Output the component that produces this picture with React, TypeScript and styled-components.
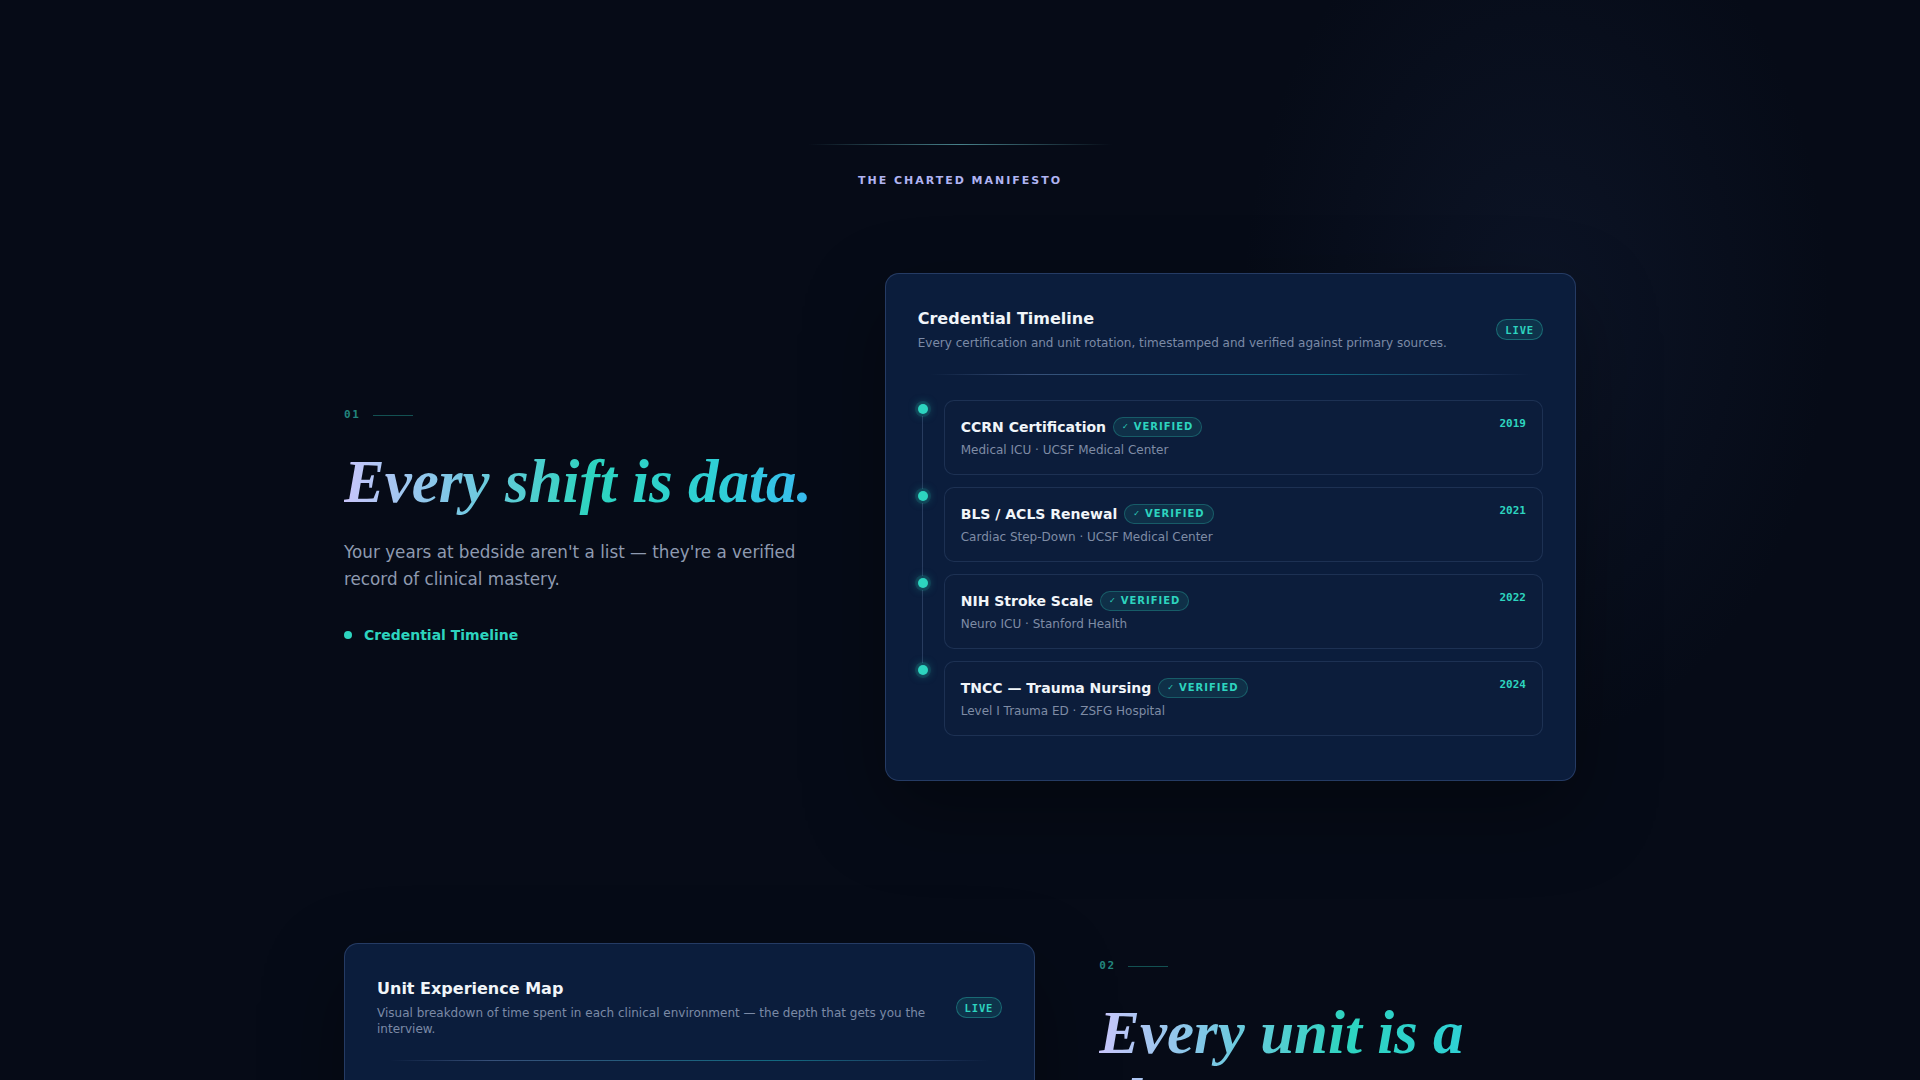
import React from 'react'
import styled, { createGlobalStyle } from 'styled-components'

const GlobalStyle = createGlobalStyle`
	html, body {
		margin: 0;
		padding: 0;
		background: #060b17;
	}
	body {
		font-family: 'DejaVu Sans', 'Noto Sans', sans-serif;
		color: #e2e8f0;
		-webkit-font-smoothing: antialiased;
	}
	* {
		box-sizing: border-box;
	}
`

const Page = styled.div`
	min-height: 100vh;
	padding: 144px 0 120px;
	background:
		radial-gradient(ellipse 420px 620px at 80% 22%, rgba(34, 52, 92, 0.22), transparent 70%),
		#060b17;
	overflow: hidden;
`

const Container = styled.div`
	width: 1232px;
	margin: 0 auto;
`

const Masthead = styled.header`
	display: flex;
	flex-direction: column;
	align-items: center;
	margin-bottom: 84px;
`

const MastLine = styled.div`
	width: 304px;
	height: 1px;
	margin-bottom: 28px;
	background: linear-gradient(90deg, transparent, rgba(94, 170, 178, 0.75) 50%, transparent);
`

const MastLabel = styled.div`
	font-size: 11px;
	line-height: 16px;
	font-weight: 700;
	letter-spacing: 0.18em;
	color: #b0b4f2;
	text-transform: uppercase;
`

const Sections = styled.div`
	display: flex;
	flex-direction: column;
	gap: 162px;
`

const Section = styled.section<{ $reverse?: boolean }>`
	display: grid;
	grid-template-columns: ${(p) => (p.$reverse ? '1.45fr 1fr' : '1fr 1.45fr')};
	gap: 64px;
	align-items: center;
`

const Copy = styled.div`
	display: flex;
	flex-direction: column;
`

const Index = styled.div`
	display: flex;
	align-items: center;
	gap: 12px;
	font-family: 'DejaVu Sans Mono', 'Liberation Mono', monospace;
	font-size: 11px;
	line-height: 14px;
	font-weight: 700;
	letter-spacing: 0.15em;
	color: #22857d;
	margin-bottom: 26px;

	&::after {
		content: '';
		width: 40px;
		height: 1px;
		background: rgba(45, 212, 191, 0.35);
	}
`

const Headline = styled.h2`
	margin: 0 0 24px;
	font-family: 'Liberation Serif', 'DejaVu Serif', serif;
	font-style: italic;
	font-weight: 700;
	font-size: 61px;
	line-height: 1.1;
	background: linear-gradient(90deg, #c9c6fb 0%, #7fc7e6 22%, #2dd4bf 52%, #2fd0d6 78%, #3ab8f2 100%);
	-webkit-background-clip: text;
	background-clip: text;
	color: transparent;
`

const Lead = styled.p`
	margin: 0 0 32px;
	font-size: 16.8px;
	line-height: 27px;
	color: #8e9ab0;
`

const FeatureLink = styled.div`
	display: flex;
	align-items: center;
	gap: 12px;
	font-size: 14px;
	line-height: 20px;
	font-weight: 700;
	color: #2dd4bf;

	&::before {
		content: '';
		width: 8px;
		height: 8px;
		border-radius: 50%;
		background: #2dd4bf;
	}
`

const Card = styled.div`
	background: #0b1d3c;
	border: 1px solid rgba(92, 124, 186, 0.32);
	border-radius: 14px;
	padding: 34px 32px 44px;
	box-shadow: 0 30px 80px rgba(0, 0, 0, 0.35);
`

const CardHead = styled.div`
	display: flex;
	align-items: center;
	gap: 24px;
`

const CardText = styled.div`
	flex: 1;
	min-width: 0;
`

const CardTitle = styled.h3`
	margin: 0 0 6px;
	font-size: 16px;
	line-height: 21px;
	font-weight: 700;
	color: #f1f5f9;
`

const CardDesc = styled.p`
	margin: 0;
	font-size: 12px;
	line-height: 16.5px;
	color: #7b8aa6;
`

const Badge = styled.span`
	flex: none;
	display: inline-flex;
	align-items: center;
	height: 21px;
	padding: 0 8px;
	border-radius: 999px;
	font-family: 'DejaVu Sans Mono', 'Liberation Mono', monospace;
	font-weight: 700;
	font-size: 10.5px;
	letter-spacing: 0.08em;
	color: #2dd4bf;
	background: rgba(45, 212, 191, 0.12);
	border: 1px solid rgba(45, 212, 191, 0.35);
`

const Divider = styled.div`
	height: 1px;
	margin: 22px 0 25px;
	background: linear-gradient(
		90deg,
		transparent 2%,
		rgba(90, 120, 170, 0.55) 18%,
		rgba(20, 130, 150, 0.75) 65%,
		rgba(60, 90, 140, 0.4) 88%,
		transparent 98%
	);
`

const Timeline = styled.ol`
	list-style: none;
	margin: 0;
	padding: 0;
	display: flex;
	flex-direction: column;
	gap: 12px;
`

const Entry = styled.li`
	display: grid;
	grid-template-columns: 10px 1fr;
	column-gap: 16px;
`

const Rail = styled.div<{ $last?: boolean }>`
	position: relative;

	&::before {
		content: '';
		position: absolute;
		top: 4px;
		left: 0;
		width: 10px;
		height: 10px;
		border-radius: 50%;
		background: #2dd4bf;
		box-shadow: 0 0 0 3px rgba(45, 212, 191, 0.12), 0 0 10px rgba(45, 212, 191, 0.55);
	}

	&::after {
		content: '';
		display: ${(p) => (p.$last ? 'none' : 'block')};
		position: absolute;
		top: 16px;
		bottom: -14px;
		left: 4.5px;
		width: 1px;
		background: rgba(120, 145, 185, 0.28);
	}
`

const EntryBox = styled.div`
	display: flex;
	justify-content: space-between;
	align-items: flex-start;
	padding: 15px 16px;
	border: 1px solid rgba(100, 130, 180, 0.2);
	border-radius: 10px;
	background: #0c1d3b;
`

const EntryMain = styled.div`
	display: flex;
	flex-direction: column;
	gap: 3px;
`

const EntryTitleRow = styled.div`
	display: flex;
	align-items: center;
	gap: 7px;
	height: 22px;
`

const EntryTitle = styled.span`
	font-size: 14px;
	font-weight: 700;
	color: #f1f5f9;
`

const Verified = styled.span`
	display: inline-flex;
	align-items: center;
	gap: 5px;
	height: 20px;
	padding: 0 8px;
	border-radius: 999px;
	font-size: 10px;
	font-weight: 700;
	letter-spacing: 0.1em;
	color: #2dd4bf;
	background: rgba(45, 212, 191, 0.1);
	border: 1px solid rgba(45, 212, 191, 0.28);
`

const Check = styled.span`
	font-size: 8px;
	letter-spacing: 0;
`

const EntryMeta = styled.span`
	font-size: 12px;
	line-height: 18px;
	color: #7f8ca5;
`

const Year = styled.span`
	font-family: 'DejaVu Sans Mono', 'Liberation Mono', monospace;
	font-size: 11px;
	line-height: 14px;
	font-weight: 700;
	margin-top: 1px;
	color: #2dd4bf;
`

const UnitList = styled.div`
	display: flex;
	flex-direction: column;
	gap: 20px;
`

const UnitRow = styled.div`
	display: grid;
	grid-template-columns: 150px 1fr 70px;
	align-items: center;
	gap: 16px;
	font-size: 12px;
	color: #a3b0c6;
`

const Track = styled.div`
	height: 8px;
	border-radius: 999px;
	background: rgba(100, 130, 180, 0.15);
	overflow: hidden;
`

const Fill = styled.div`
	height: 100%;
	border-radius: 999px;
	background: linear-gradient(90deg, #818cf8, #2dd4bf);
`

const Hours = styled.span`
	font-family: 'DejaVu Sans Mono', 'Liberation Mono', monospace;
	font-size: 11px;
	font-weight: 700;
	color: #2dd4bf;
	text-align: right;
`

const credentials = [
	{ title: 'CCRN Certification', meta: 'Medical ICU · UCSF Medical Center', year: '2019' },
	{ title: 'BLS / ACLS Renewal', meta: 'Cardiac Step-Down · UCSF Medical Center', year: '2021' },
	{ title: 'NIH Stroke Scale', meta: 'Neuro ICU · Stanford Health', year: '2022' },
	{ title: 'TNCC — Trauma Nursing', meta: 'Level I Trauma ED · ZSFG Hospital', year: '2024' },
]

const units = [
	{ name: 'Medical ICU', share: 82, time: '3.2 yrs' },
	{ name: 'Cardiac Step-Down', share: 54, time: '2.1 yrs' },
	{ name: 'Neuro ICU', share: 38, time: '1.4 yrs' },
	{ name: 'Level I Trauma ED', share: 26, time: '0.9 yrs' },
	{ name: 'Float Pool', share: 14, time: '0.5 yrs' },
]

const CredentialCard = () => (
	<Card>
		<CardHead>
			<CardText>
				<CardTitle>Credential Timeline</CardTitle>
				<CardDesc>
					Every certification and unit rotation, timestamped and verified against primary sources.
				</CardDesc>
			</CardText>
			<Badge>LIVE</Badge>
		</CardHead>
		<Divider />
		<Timeline>
			{credentials.map((c, i) => (
				<Entry key={c.title}>
					<Rail $last={i === credentials.length - 1} />
					<EntryBox>
						<EntryMain>
							<EntryTitleRow>
								<EntryTitle>{c.title}</EntryTitle>
								<Verified>
									<Check>✓</Check>VERIFIED
								</Verified>
							</EntryTitleRow>
							<EntryMeta>{c.meta}</EntryMeta>
						</EntryMain>
						<Year>{c.year}</Year>
					</EntryBox>
				</Entry>
			))}
		</Timeline>
	</Card>
)

const UnitCard = () => (
	<Card>
		<CardHead>
			<CardText>
				<CardTitle>Unit Experience Map</CardTitle>
				<CardDesc>
					Visual breakdown of time spent in each clinical environment — the depth that gets you the
					interview.
				</CardDesc>
			</CardText>
			<Badge>LIVE</Badge>
		</CardHead>
		<Divider />
		<UnitList>
			{units.map((u) => (
				<UnitRow key={u.name}>
					<span>{u.name}</span>
					<Track>
						<Fill style={{ width: `${u.share}%` }} />
					</Track>
					<Hours>{u.time}</Hours>
				</UnitRow>
			))}
		</UnitList>
	</Card>
)

export default function App() {
	return (
		<>
			<GlobalStyle />
			<Page>
				<Container>
					<Masthead>
						<MastLine />
						<MastLabel>The Charted Manifesto</MastLabel>
					</Masthead>
					<Sections>
						<Section>
							<Copy>
								<Index>01</Index>
								<Headline>Every shift is data.</Headline>
								<Lead>
									Your years at bedside aren't a list — they're a verified record of clinical mastery.
								</Lead>
								<FeatureLink>Credential Timeline</FeatureLink>
							</Copy>
							<CredentialCard />
						</Section>
						<Section $reverse>
							<UnitCard />
							<Copy>
								<Index>02</Index>
								<Headline>Every unit is a chapter.</Headline>
								<Lead>
									ICU, step-down, trauma — the places you've worked tell the story of what you can
									handle.
								</Lead>
								<FeatureLink>Unit Experience Map</FeatureLink>
							</Copy>
						</Section>
					</Sections>
				</Container>
			</Page>
		</>
	)
}
